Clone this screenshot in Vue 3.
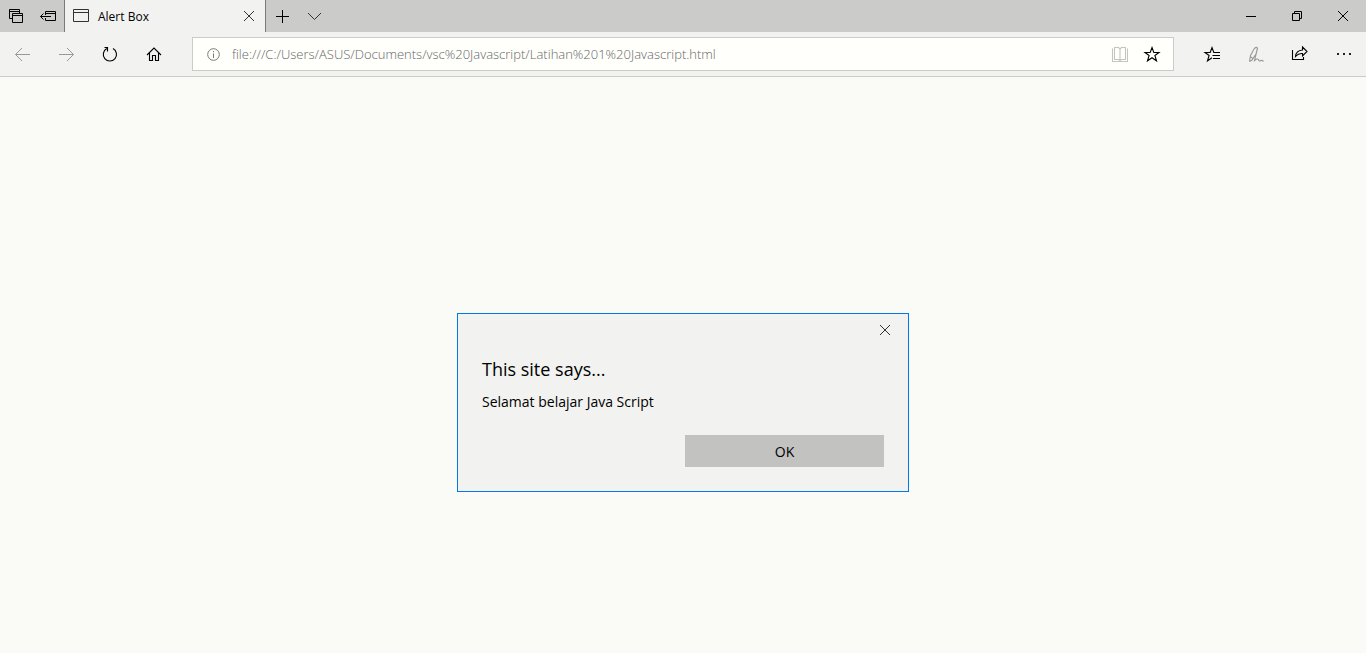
<script setup>
import { ref } from 'vue'

const address = ref('file:///C:/Users/ASUS/Documents/vsc%20Javascript/Latihan%201%20Javascript.html')
</script>

<template>
  <div class="browser">
    <header class="titlebar">
      <button class="tab-tool" aria-label="Tabs you've set aside">
        <svg class="icon" viewBox="0 0 24 24"><path d="M8 14.5H5.5V5.5H15.5V9M5.5 7.5H15.5M8.5 9.5H18.5V18.5H8.5ZM8.5 11.5H18.5" /></svg>
      </button>
      <button class="tab-tool" aria-label="Set these tabs aside">
        <svg class="icon" viewBox="0 0 24 24"><path d="M9.5 11V7.5H19.5V16.5H9.5V14M9.5 9.5H19.5M4.5 12.5H15M7.5 9.5L4.5 12.5L7.5 15.5" /></svg>
      </button>
      <div class="tab">
        <svg class="icon tab-icon" viewBox="0 0 24 24"><path d="M4.5 5.5H19.5V17.5H4.5ZM4.5 8.5H19.5" /></svg>
        <span class="tab-title">Alert Box</span>
        <button class="tab-close" aria-label="Close tab">
          <svg class="icon thin" viewBox="0 0 24 24"><path d="M7 7L17 17M17 7L7 17" /></svg>
        </button>
      </div>
      <button class="tab-tool" aria-label="New tab">
        <svg class="icon" viewBox="0 0 24 24"><path d="M6 12.5H19M12.5 6V19" /></svg>
      </button>
      <button class="tab-tool" aria-label="Show tab previews">
        <svg class="icon thin" viewBox="0 0 24 24"><path d="M6 9L12.5 15.5L19 9" /></svg>
      </button>
      <div class="window-buttons">
        <button class="window-button" aria-label="Minimize">
          <svg class="icon" viewBox="0 0 24 24"><path d="M7 12.5H17" /></svg>
        </button>
        <button class="window-button" aria-label="Restore">
          <svg class="icon" viewBox="0 0 24 24"><path d="M7.5 9.5H14.5V16.5H7.5ZM9.5 9V7.5H16.5V14.5H15" /></svg>
        </button>
        <button class="window-button" aria-label="Close">
          <svg class="icon" viewBox="0 0 24 24"><path d="M7 7L17 17M17 7L7 17" /></svg>
        </button>
      </div>
    </header>

    <nav class="toolbar">
      <button class="tool muted" aria-label="Back">
        <svg class="icon" viewBox="0 0 24 24"><path d="M5.5 12.5H20M12 6L5.5 12.5L12 19" /></svg>
      </button>
      <button class="tool muted" aria-label="Forward">
        <svg class="icon" viewBox="0 0 24 24"><path d="M5 12.5H19.5M13 6L19.5 12.5L13 19" /></svg>
      </button>
      <button class="tool" aria-label="Refresh">
        <svg class="icon bold" viewBox="0 0 24 24"><path d="M8.8 6.6A6.6 6.6 0 1 0 15 6.6M6.5 5.5H9.5V9.5" /></svg>
      </button>
      <button class="tool" aria-label="Home">
        <svg class="icon bold" viewBox="0 0 24 24"><path d="M5 13L12 6L19 13M7.5 11V18.5H10.5V13.5H13.5V18.5H16.5V11" /></svg>
      </button>
      <div class="address">
        <svg class="icon info" viewBox="0 0 24 24"><circle cx="12.5" cy="12.5" r="5.8" /><path d="M12.5 11.5V16M12.5 9V10.2" /></svg>
        <input v-model="address" class="address-input" type="text" aria-label="Address" spellcheck="false" />
        <button class="address-tool pale" aria-label="Reading view">
          <svg class="icon bold" viewBox="0 0 24 24"><path d="M12 7V18M4.5 6.5V19.5H19.5V6.5M6.5 17.5V5.5H10.5L12 7L13.5 5.5H17.5V17.5H13.5L12 18.5L10.5 17.5Z" /></svg>
        </button>
        <button class="address-tool" aria-label="Add to favorites">
          <svg class="icon bold" viewBox="0 0 24 24"><path d="M12 5.5L13.8 10.5H19L14.9 13.5L16.5 18.8L12 15.7L7.5 18.8L9.1 13.5L5 10.5H10.2Z" /></svg>
        </button>
      </div>
      <button class="tool" aria-label="Hub">
        <svg class="icon bold" viewBox="0 0 24 24"><path d="M20 10.5H13.8L12 5.5L10.2 10.5H5L9.1 13.5L7.5 18.8L12 15.7M12.5 13.5H20M13 16.5H20" /></svg>
      </button>
      <button class="tool muted" aria-label="Add notes">
        <svg class="icon bold" viewBox="0 0 24 24"><path d="M5.5 19.5L6.5 13.5L10 7Q12.5 4 13.5 6.5L12 12L8 18L5.5 19.5M6.8 15L9 16.5M13.3 7L10.5 18.5Q13.5 16 14.5 17.5Q15.2 19.8 17 18.5Q18.5 18 19.5 19.5" /></svg>
      </button>
      <button class="tool" aria-label="Share">
        <svg class="icon bold" viewBox="0 0 24 24"><path d="M4.5 8V17.5H15.5V15M14.5 5L19 9.5L14.5 14V11.5Q10.5 11 7.5 14.5Q8 8.5 14.5 8Z" /></svg>
      </button>
      <button class="tool" aria-label="More">
        <svg class="icon dots" viewBox="0 0 24 24"><path d="M5 11h2v2h-2ZM11 11h2v2h-2ZM17 11h2v2h-2Z" /></svg>
      </button>
    </nav>

    <main class="page">
      <section class="dialog" role="alertdialog" aria-labelledby="dialog-title" aria-describedby="dialog-message">
        <button class="dialog-close" aria-label="Close dialog">
          <svg class="icon thin" viewBox="0 0 24 24"><path d="M7 7L17 17M17 7L7 17" /></svg>
        </button>
        <h1 id="dialog-title" class="dialog-title">This site says...</h1>
        <p id="dialog-message" class="dialog-message">Selamat belajar Java Script</p>
        <button class="dialog-ok">OK</button>
      </section>
    </main>
  </div>
</template>

<style>
body {
  margin: 0;
  background: #fafbf6;
}
</style>

<style scoped>
.browser {
  display: flex;
  flex-direction: column;
  min-height: 100vh;
  font-family: "Segoe UI", "Open Sans", "Noto Sans", sans-serif;
  color: #000;
}

button {
  display: flex;
  align-items: center;
  justify-content: center;
  flex: none;
  margin: 0;
  padding: 0;
  border: 0;
  background: none;
  color: inherit;
  font-family: inherit;
}

.icon {
  flex: none;
  width: 24px;
  height: 24px;
  fill: none;
  stroke: currentColor;
  stroke-width: 1;
}

.bold {
  stroke-width: 1.1;
}

.thin {
  color: #333;
}

.dots {
  fill: #222;
  stroke: none;
}

.titlebar {
  display: flex;
  height: 32px;
  background: #cbcbc9;
}

.tab-tool {
  width: 32px;
}

.tab {
  display: flex;
  align-items: center;
  box-sizing: border-box;
  width: 202px;
  padding: 0 4px;
  border: solid #7a7a78;
  border-width: 0 1px;
  background: #f2f2f0;
}

.tab-icon {
  color: #333;
}

.tab-title {
  flex: 1;
  padding: 2px 0 0 5px;
  font-size: 12px;
  line-height: 18px;
}

.tab-close {
  width: 24px;
  height: 24px;
}

.window-buttons {
  display: flex;
  margin-left: auto;
}

.window-button {
  width: 46px;
}

.toolbar {
  display: flex;
  align-items: center;
  height: 44px;
  border-bottom: 1px solid #cbcbc9;
  background: #f2f2f0;
}

.tool {
  width: 44px;
  height: 44px;
}

.muted {
  color: #999;
}

.pale {
  color: #c4c4c2;
}

.address {
  display: flex;
  flex: 1;
  align-items: center;
  box-sizing: border-box;
  height: 34px;
  margin: 0 16px;
  padding: 0 5px 0 8px;
  border: 1px solid #cbcbc9;
  background: #fffffc;
}

.info {
  color: #777;
}

.address-input {
  flex: 1;
  min-width: 0;
  padding: 0 0 0 7px;
  border: 0;
  outline: 0;
  background: transparent;
  color: #666;
  font-family: inherit;
  font-size: 13px;
  font-weight: 300;
  line-height: 20px;
}

.address-tool {
  width: 32px;
  height: 32px;
}

.page {
  flex: 1;
  padding: 236px 16px 32px;
}

.dialog {
  display: flex;
  flex-direction: column;
  box-sizing: border-box;
  max-width: 452px;
  margin: 0 auto;
  padding: 0 24px 24px;
  border: 1px solid #0078e8;
  background: #f2f2f0;
}

.dialog-close {
  align-self: flex-end;
  width: 32px;
  height: 32px;
  margin-right: -17px;
}

.dialog-title {
  margin: 9px 0 0;
  font-size: 18px;
  font-weight: 400;
  line-height: 28px;
}

.dialog-message {
  margin: 8px 0 0;
  font-size: 14px;
  line-height: 22px;
}

.dialog-ok {
  align-self: flex-end;
  width: calc(50% - 2px);
  height: 32px;
  margin-top: 22px;
  background: #c2c2c0;
  font-size: 14px;
}
</style>
